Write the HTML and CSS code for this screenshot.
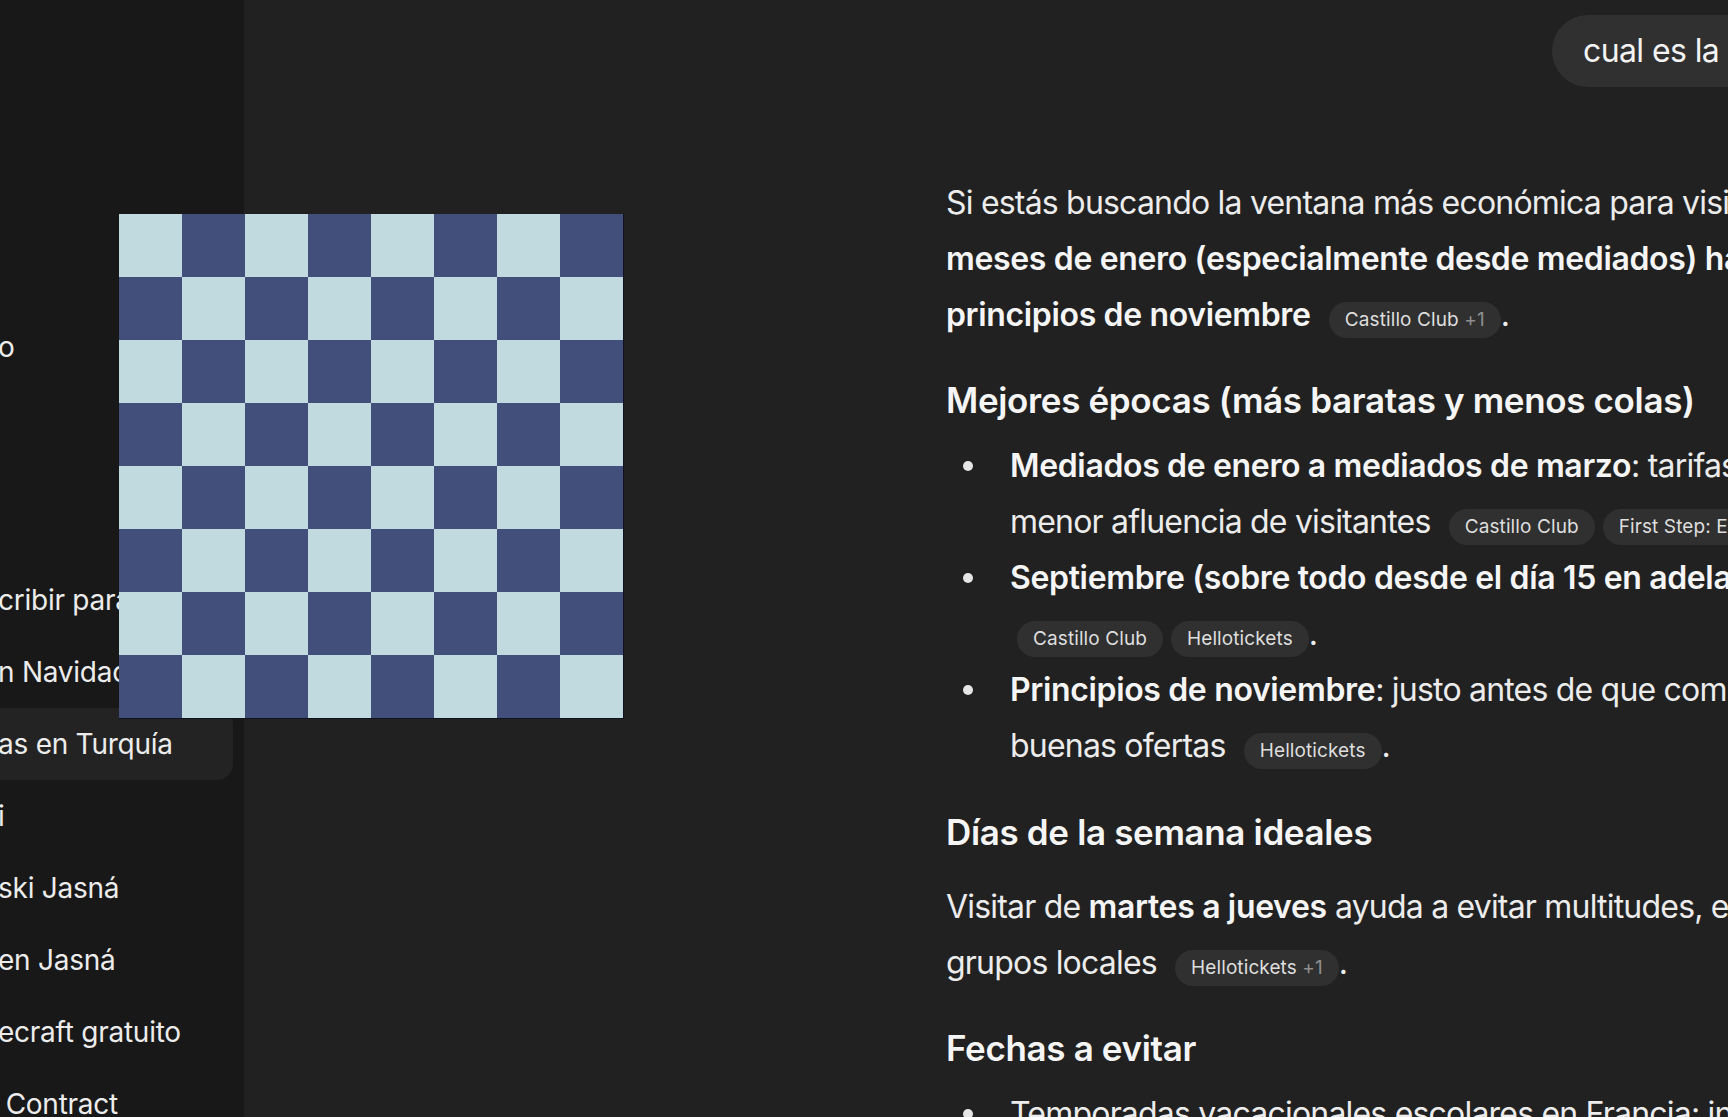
FILE: index.html
```html
<!DOCTYPE html>
<html lang="es">
<head>
<meta charset="utf-8">
<title>ChatGPT</title>
<link rel="stylesheet" href="styles.css">
</head>
<body>
<div class="app">
  <aside class="sidebar">
    <div class="item">o</div>
    <div class="gap"></div>
    <div class="item">cribir para un cuento infantil</div>
    <div class="item">n Navidad en familia</div>
    <div class="item active">as en Turquía</div>
    <div class="item">i</div>
    <div class="item">ski Jasná</div>
    <div class="item">en Jasná</div>
    <div class="item">ecraft gratuito</div>
    <div class="item">&nbsp;Contract</div>
  </aside>
  <main class="main">
    <div class="user-row">
      <div class="bubble">cual es la mejor fecha para ir a Disneyland París más barato</div>
    </div>
    <div class="answer">
      <p class="para">Si estás buscando la ventana más económica para visitar Disneyland París, los<br><strong>meses de enero (especialmente desde mediados) hasta marzo, septiembre y</strong><br><strong>principios de noviembre</strong> <span class="cites"><span class="chip">Castillo Club <span class="more">+1</span></span></span>.</p>

      <h3 class="heading">Mejores épocas (más baratas y menos colas)</h3>
      <ul class="list">
        <li class="li"><span class="marker"></span><div class="li-body"><strong>Mediados de enero a mediados de marzo</strong>: tarifas más bajas y<br>menor afluencia de visitantes <span class="cites"><span class="chip">Castillo Club</span><span class="chip">First Step: Europe</span></span>.</div></li>
        <li class="li"><span class="marker"></span><div class="li-body"><strong>Septiembre (sobre todo desde el día 15 en adelante)</strong>: clima agradable<br><span class="cites start"><span class="chip">Castillo Club</span><span class="chip">Hellotickets</span></span>.</div></li>
        <li class="li"><span class="marker"></span><div class="li-body"><strong>Principios de noviembre</strong>: justo antes de que comience la Navidad, con<br>buenas ofertas <span class="cites"><span class="chip">Hellotickets</span></span>.</div></li>
      </ul>

      <h3 class="heading">Días de la semana ideales</h3>
      <p class="para after-heading">Visitar de <strong>martes a jueves</strong> ayuda a evitar multitudes, especialmente los<br>grupos locales <span class="cites"><span class="chip">Hellotickets <span class="more">+1</span></span></span>.</p>

      <h3 class="heading">Fechas a evitar</h3>
      <ul class="list">
        <li class="li"><span class="marker"></span><div class="li-body">Temporadas vacacionales escolares en Francia: invierno, primavera y verano</div></li>
      </ul>
    </div>
  </main>
</div>
<div class="board"></div>
</body>
</html>
```

FILE: styles.css
```css
* {
  box-sizing: border-box;
  margin: 0;
  padding: 0;
}

html,
body {
  width: 1728px;
  height: 1117px;
  overflow: hidden;
  background: #212121;
}

body {
  position: relative;
  font-family: "Inter", "Noto Sans", sans-serif;
  color: #ececec;
}

.app {
  display: flex;
  height: 1117px;
}

/* Sidebar */
.sidebar {
  width: 244px;
  flex: none;
  background: #181818;
  padding-top: 311px;
  display: flex;
  flex-direction: column;
  overflow: hidden;
}

.item {
  flex: none;
  height: 72px;
  line-height: 72px;
  font-size: 28px;
  letter-spacing: -0.25px;
  white-space: nowrap;
  text-indent: -2px;
  margin-right: 11px;
  border-radius: 0 16px 16px 0;
  color: #ececec;
}

.item.active {
  background: #232323;
}

.gap {
  flex: none;
  height: 181px;
}

/* Main */
.main {
  flex: 1;
  min-width: 0;
  overflow: hidden;
  padding-top: 15px;
}

.user-row {
  display: flex;
  padding-left: 1308px;
}

.bubble {
  flex: none;
  height: 72px;
  padding: 8px 31px;
  line-height: 56px;
  font-size: 32px;
  letter-spacing: -0.6px;
  white-space: nowrap;
  border-radius: 36px;
  background: #303030;
  color: #f3f3f3;
}

.answer {
  margin-top: 88px;
  padding-left: 702px;
  font-size: 32px;
  line-height: 56px;
  letter-spacing: -0.8px;
  white-space: nowrap;
}

.answer strong {
  font-weight: 600;
  letter-spacing: -0.35px;
  color: #f5f5f5;
}

.para.after-heading {
  margin-top: 27px;
}

.heading {
  margin-top: 38px;
  font-size: 35px;
  line-height: 40px;
  font-weight: 600;
  letter-spacing: -0.35px;
  color: #f5f5f5;
}

.para + .heading {
  margin-top: 37px;
}

.list {
  list-style: none;
  margin-top: 18px;
}

.li {
  display: flex;
}

.marker {
  flex: none;
  width: 64px;
  height: 56px;
  display: flex;
  align-items: center;
  padding-left: 17px;
}

.marker::before {
  content: "";
  width: 10px;
  height: 10px;
  border-radius: 50%;
  background: #e6e6e6;
}

/* Citation chips */
.cites {
  margin-left: 10px;
}

.cites.start {
  margin-left: 7px;
}

.chip {
  display: inline-block;
  height: 36px;
  line-height: 36px;
  padding: 0 16px;
  border-radius: 18px;
  background: #303030;
  font-size: 19px;
  font-weight: 400;
  letter-spacing: 0.1px;
  color: #dedede;
  vertical-align: baseline;
}

.chip + .chip {
  margin-left: 8px;
}

.more {
  color: #8e8e8e;
}

/* Checkerboard overlay */
.board {
  position: absolute;
  left: 119px;
  top: 214px;
  width: 505px;
  height: 505px;
  border-right: 1px solid #10121f;
  border-bottom: 1px solid #10121f;
  background: repeating-conic-gradient(#434f7b 0 25%, #c1dae0 0 50%) 0 0 / 126px 126px;
  z-index: 10;
}
```
